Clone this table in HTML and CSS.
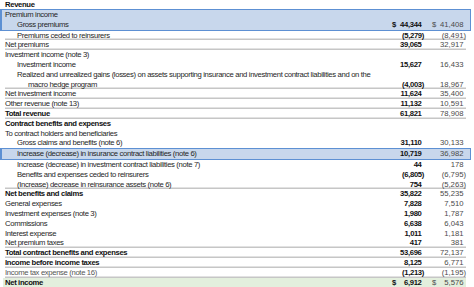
FILE: index.html
```html
<!DOCTYPE html>
<html>
<head>
<meta charset="utf-8">
<link rel="stylesheet" href="styles.css">
</head>
<body>
<div class="sheet">
  <div class="row head"><div class="lbl b">Revenue</div></div>
  <div class="box">
    <div class="row"><div class="lbl">Premium income</div></div>
    <div class="row"><div class="lbl i1">Gross premiums</div><div class="v1 cur"><span>$</span><span>44,344</span></div><div class="v2 cur"><span>$</span><span>41,408</span></div></div>
  </div>
  <div class="row line"><div class="lbl i1">Premiums ceded to reinsurers</div><div class="v1"><span class="neg">(5,279)</span></div><div class="v2"><span class="neg">(8,491)</span></div></div>
  <div class="row line"><div class="lbl">Net premiums</div><div class="v1">39,065</div><div class="v2">32,917</div></div>
  <div class="row"><div class="lbl">Investment income (note 3)</div></div>
  <div class="row"><div class="lbl i1">Investment income</div><div class="v1">15,627</div><div class="v2">16,433</div></div>
  <div class="row"><div class="lbl i1">Realized and unrealized gains (losses) on assets supporting insurance and investment contract liabilities and on the</div></div>
  <div class="row line"><div class="lbl i2">macro hedge program</div><div class="v1"><span class="neg">(4,003)</span></div><div class="v2">18,967</div></div>
  <div class="row line"><div class="lbl">Net investment income</div><div class="v1">11,624</div><div class="v2">35,400</div></div>
  <div class="row line"><div class="lbl">Other revenue (note 13)</div><div class="v1">11,132</div><div class="v2">10,591</div></div>
  <div class="row line"><div class="lbl b">Total revenue</div><div class="v1">61,821</div><div class="v2">78,908</div></div>
  <div class="row"><div class="lbl b">Contract benefits and expenses</div></div>
  <div class="row"><div class="lbl">To contract holders and beneficiaries</div></div>
  <div class="row"><div class="lbl i1">Gross claims and benefits (note 6)</div><div class="v1">31,110</div><div class="v2">30,133</div></div>
  <div class="box">
    <div class="row"><div class="lbl i1">Increase (decrease) in insurance contract liabilities (note 6)</div><div class="v1">10,719</div><div class="v2">36,982</div></div>
  </div>
  <div class="row"><div class="lbl i1">Increase (decrease) in investment contract liabilities (note 7)</div><div class="v1">44</div><div class="v2">178</div></div>
  <div class="row"><div class="lbl i1">Benefits and expenses ceded to reinsurers</div><div class="v1"><span class="neg">(6,805)</span></div><div class="v2"><span class="neg">(6,795)</span></div></div>
  <div class="row line"><div class="lbl i1">(Increase) decrease in reinsurance assets (note 6)</div><div class="v1">754</div><div class="v2"><span class="neg">(5,263)</span></div></div>
  <div class="row"><div class="lbl b">Net benefits and claims</div><div class="v1">35,822</div><div class="v2">55,235</div></div>
  <div class="row"><div class="lbl">General expenses</div><div class="v1">7,828</div><div class="v2">7,510</div></div>
  <div class="row"><div class="lbl">Investment expenses (note 3)</div><div class="v1">1,980</div><div class="v2">1,787</div></div>
  <div class="row"><div class="lbl">Commissions</div><div class="v1">6,638</div><div class="v2">6,043</div></div>
  <div class="row"><div class="lbl">Interest expense</div><div class="v1">1,011</div><div class="v2">1,181</div></div>
  <div class="row line"><div class="lbl">Net premium taxes</div><div class="v1">417</div><div class="v2">381</div></div>
  <div class="row line"><div class="lbl b">Total contract benefits and expenses</div><div class="v1">53,696</div><div class="v2">72,137</div></div>
  <div class="row line"><div class="lbl b">Income before income taxes</div><div class="v1">8,125</div><div class="v2">6,771</div></div>
  <div class="row line"><div class="lbl muted">Income tax expense (note 16)</div><div class="v1"><span class="neg">(1,213)</span></div><div class="v2"><span class="neg">(1,195)</span></div></div>
  <div class="row total"><div class="lbl b">Net income</div><div class="v1 cur"><span>$</span><span>6,912</span></div><div class="v2 cur"><span>$</span><span>5,576</span></div></div>
</div>
</body>
</html>
```
FILE: styles.css
```css
html, body {
  margin: 0;
  padding: 0;
  background: #ffffff;
}
body {
  font-family: "Liberation Sans", Arial, sans-serif;
  font-size: 7.7px;
  letter-spacing: -0.35px;
  color: #262626;
}
.sheet {
  width: 471px;
}
.row {
  display: grid;
  grid-template-columns: 1fr 36px 42px;
  height: 9.8px;
  line-height: 9.8px;
  margin: 0 5px;
  white-space: nowrap;
}
.row.line {
  box-shadow: inset 0 -1.5px 0 #c6c6c6;
}
.box {
  background: #c8d7ec;
  border: 1.5px solid #5d90d3;
  border-left-width: 2px;
  width: 468px;
}
.box .row {
  margin-left: 3px;
  margin-right: 4px;
}
.i1 { padding-left: 12px; }
.i2 { padding-left: 23px; }
.b { font-weight: bold; color: #111; }
.muted { color: #555; }
.v1, .v2 {
  text-align: right;
  padding-right: 2.5px;
}
.v1 {
  font-weight: bold;
  color: #111;
}
.v2 {
  color: #4a4a4a;
  letter-spacing: 0;
}
.neg {
  margin-right: -2.5px;
}
.cur {
  display: flex;
  justify-content: space-between;
}
.v1.cur { padding-left: 4px; }
.v2.cur { padding-left: 8px; }
.total {
  background: #e3efdd;
  height: 12px;
  margin-left: 3px;
  padding-left: 2px;
}
.head {
  height: 9px;
  line-height: 9px;
}
```
